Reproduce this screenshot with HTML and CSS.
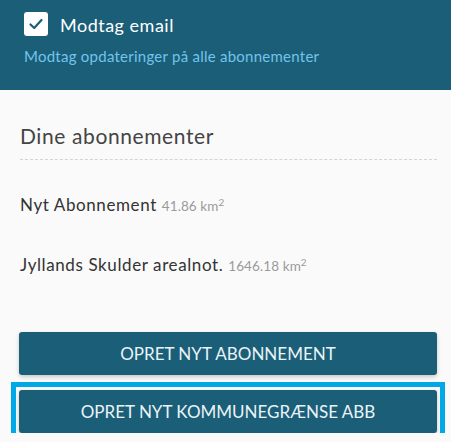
FILE: index.html
```html
<!DOCTYPE html>
<html lang="da">
<head>
  <meta charset="UTF-8">
  <title>Abonnementer</title>
  <link rel="stylesheet" href="styles.css">
</head>
<body>
  <div class="header">
    <label class="check-row">
      <span class="checkbox">
        <svg width="16" height="16" viewBox="0 0 16 16"><path d="M2.5 8.5 L6.2 12 L13.5 4" fill="none" stroke="#1b5e78" stroke-width="2.2" stroke-linecap="round" stroke-linejoin="round"/></svg>
      </span>
      <span class="check-label">Modtag email</span>
    </label>
    <div class="sub">Modtag opdateringer på alle abonnementer</div>
  </div>

  <div class="content">
    <h2 class="title">Dine abonnementer</h2>
    <ul class="subs">
      <li>Nyt Abonnement <span class="area">41.86 <span class="unit">km<sup>2</sup></span></span></li>
      <li>Jyllands Skulder arealnot. <span class="area">1646.18 <span class="unit">km<sup>2</sup></span></span></li>
    </ul>
    <div class="actions">
      <button class="btn">OPRET NYT ABONNEMENT</button>
      <div class="focus-ring">
        <button class="btn">OPRET NYT KOMMUNEGRÆNSE ABB</button>
      </div>
    </div>
  </div>
</body>
</html>
```

FILE: styles.css
```css
body {
  margin: 0;
  background: #fafafa;
  font-family: Lato, "Open Sans", sans-serif;
  color: #333;
}
.header {
  background: #1b5e78;
  height: 90px;
  box-sizing: border-box;
  padding: 12px 24px 0;
}
.check-row {
  display: flex;
  align-items: center;
  gap: 12px;
  height: 24px;
}
.checkbox {
  width: 24px;
  height: 24px;
  border-radius: 3px;
  background: #fff;
  display: flex;
  align-items: center;
  justify-content: center;
}
.check-label {
  color: #fff;
  font-size: 18px;
  letter-spacing: 0.5px;
  padding-top: 2px;
}
.sub {
  margin-top: 11px;
  color: #72c4ec;
  font-size: 15px;
  letter-spacing: 0.25px;
}
.content {
  padding: 0 14px 0 19px;
}
.title {
  margin: 33px 0 0 1px;
  padding-bottom: 11px;
  font-size: 21px;
  letter-spacing: 0.6px;
  font-weight: normal;
  color: #444;
  border-bottom: 1px dashed #d4d4d4;
}
.subs {
  list-style: none;
  margin: 0;
  padding: 0 0 0 1px;
}
.subs li {
  font-size: 17px;
  letter-spacing: 0.6px;
  color: #333;
  margin-top: 34px;
}
.subs li + li {
  margin-top: 39px;
}
.area {
  font-size: 13.5px;
  letter-spacing: 0.1px;
  color: #9a9a9a;
}
.unit {
  font-size: 13.5px;
}
.unit sup {
  font-size: 10px;
}
.actions {
  margin-top: 57px;
  display: flex;
  flex-direction: column;
  gap: 15px;
}
.btn {
  width: 100%;
  height: 43px;
  border: none;
  border-radius: 3px;
  background: #1b5e78;
  color: #eaf4f7;
  font-family: Lato, "Open Sans", sans-serif;
  font-size: 17px;
  box-shadow: 0 2px 4px rgba(0, 0, 0, 0.2);
}
.focus-ring {
  display: flex;
  outline: 5px solid #00a8e8;
  outline-offset: 3px;
}
```
